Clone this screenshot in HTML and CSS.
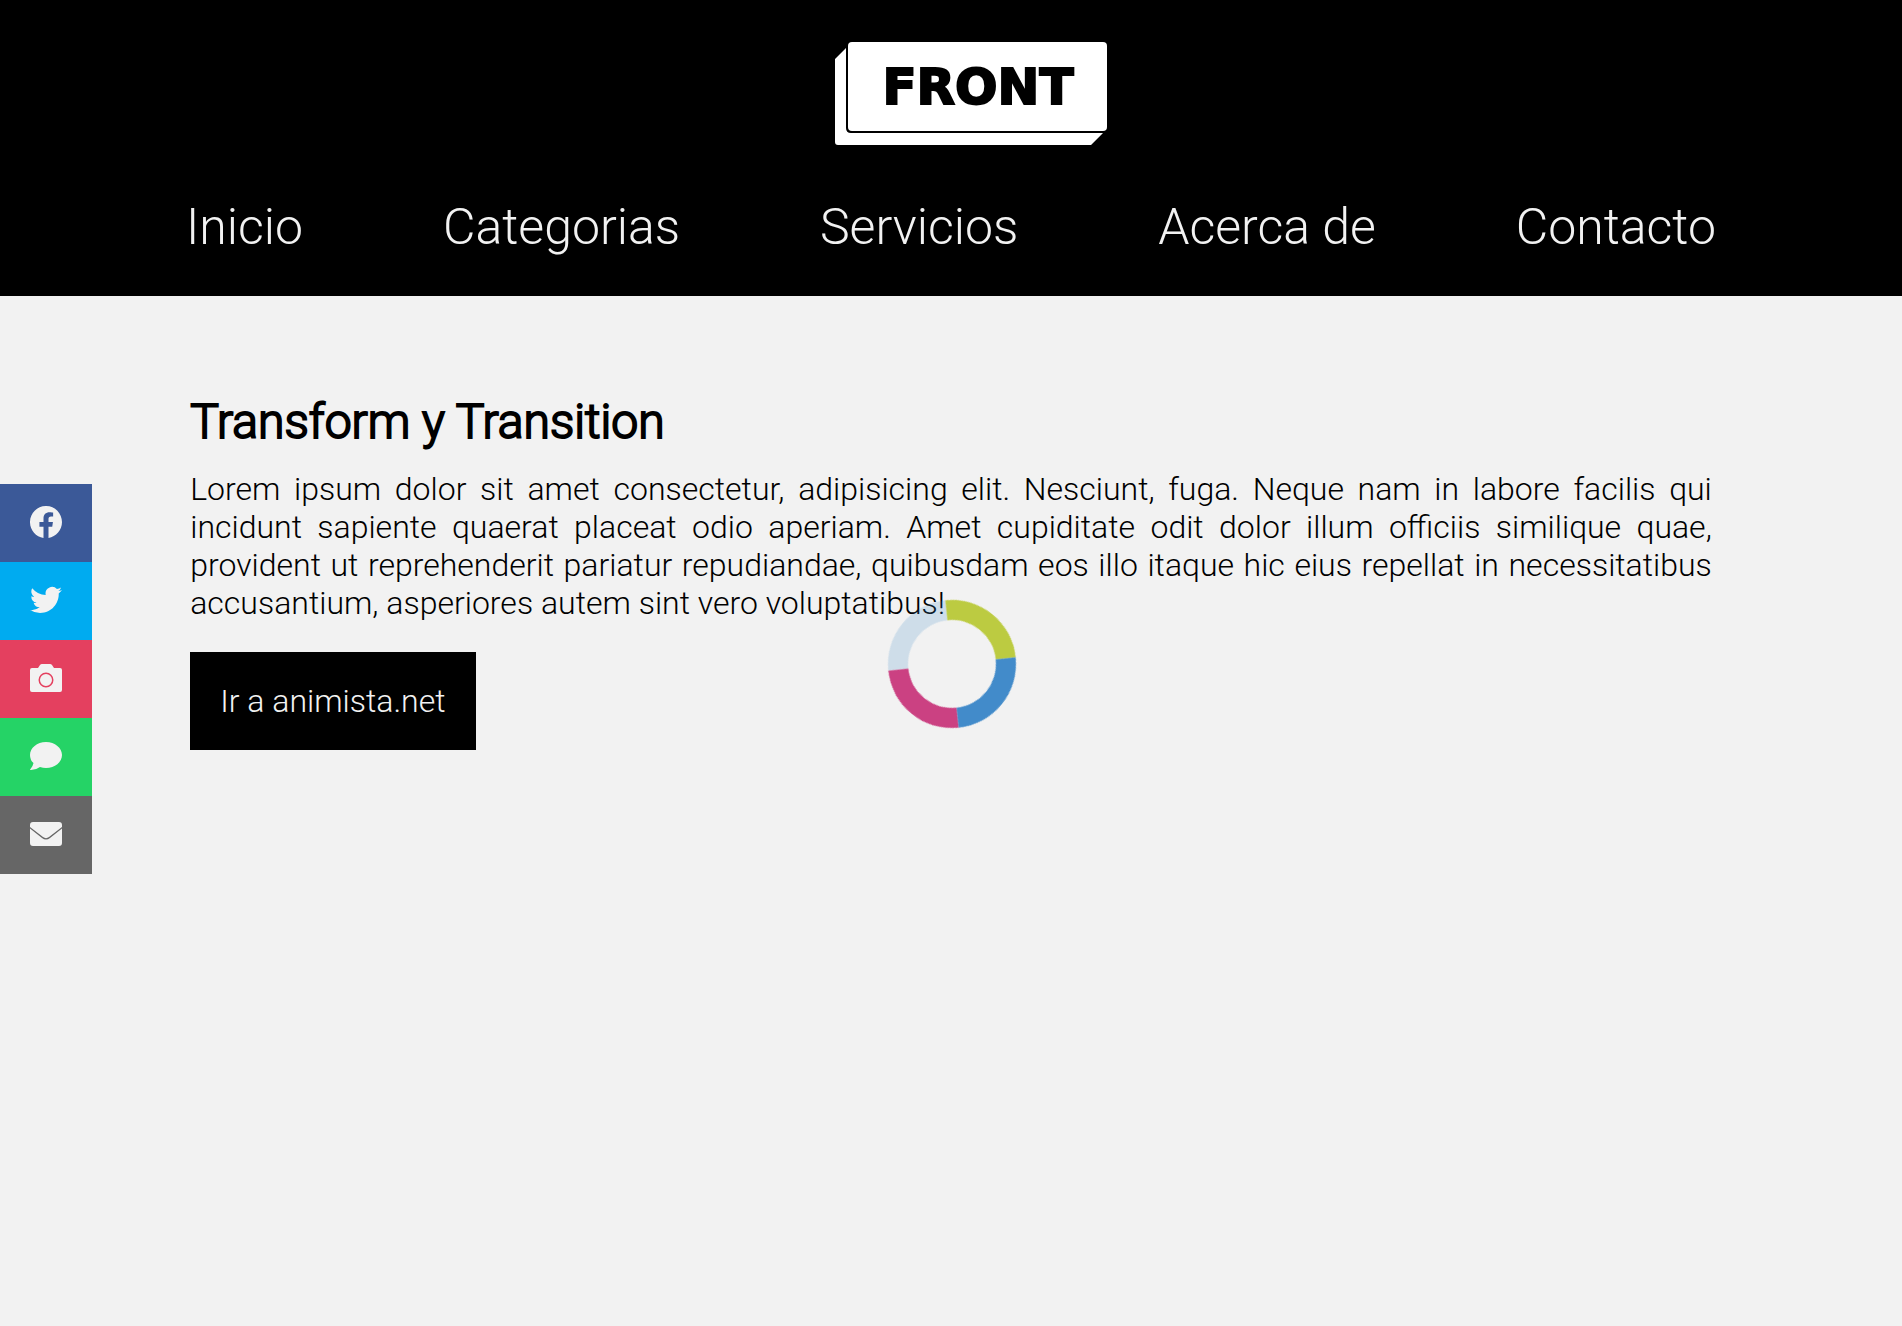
FILE: index.html
```html
<!DOCTYPE html>
<html lang="es">
<head>
  <meta charset="utf-8">
  <meta name="viewport" content="width=device-width, initial-scale=1">
  <title>Transform y Transition</title>
  <link rel="stylesheet" href="styles.css">
</head>
<body>
  <header class="header">
    <a class="logo" href="#" aria-label="Front">
      <svg class="logo-art" viewBox="0 0 272 103">
        <path class="logo-face" d="M11 6V86Q11 91 16 91H268L256 103H3Q0 103 0 100V17Z"/>
        <rect class="logo-face" x="13" y="0" width="259" height="89" rx="4"/>
        <text class="logo-text" x="143" y="62" text-anchor="middle">FRONT</text>
      </svg>
    </a>
    <nav class="nav">
      <a class="nav-link" href="#">Inicio</a>
      <a class="nav-link" href="#">Categorias</a>
      <a class="nav-link" href="#">Servicios</a>
      <a class="nav-link" href="#">Acerca de</a>
      <a class="nav-link" href="#">Contacto</a>
    </nav>
  </header>

  <main class="content">
    <h2 class="title">Transform y Transition</h2>
    <p class="text">Lorem ipsum dolor sit amet consectetur, adipisicing elit. Nesciunt, fuga. Neque nam in labore facilis qui incidunt sapiente quaerat placeat odio aperiam. Amet cupiditate odit dolor illum officiis similique quae, provident ut reprehenderit pariatur repudiandae, quibusdam eos illo itaque hic eius repellat in necessitatibus accusantium, asperiores autem sint vero voluptatibus!</p>
    <a class="button" href="#">Ir a animista.net</a>
  </main>

  <aside class="social">
    <a class="social-link facebook" href="#" aria-label="Facebook">
      <svg class="icon" viewBox="0 0 16 16"><path d="M16 8.049c0-4.446-3.582-8.05-8-8.05C3.58 0-.002 3.603-.002 8.05c0 4.017 2.926 7.347 6.75 7.951v-5.625h-2.03V8.05H6.75V6.275c0-2.017 1.195-3.131 3.022-3.131.876 0 1.791.157 1.791.157v1.98h-1.009c-.993 0-1.303.621-1.303 1.258v1.51h2.218l-.354 2.326H9.25V16c3.824-.604 6.75-3.934 6.75-7.951"/></svg>
    </a>
    <a class="social-link twitter" href="#" aria-label="Twitter">
      <svg class="icon" viewBox="0 0 16 16"><path d="M5.026 14.500c6.038 0 9.341-5.003 9.341-9.334q.002-.211-.006-.422A6.7 6.7 0 0 0 16 3.042a6.7 6.7 0 0 1-1.889.518 3.3 3.3 0 0 0 1.447-1.817 6.5 6.5 0 0 1-2.087.793A3.286 3.286 0 0 0 7.875 5.530a9.32 9.32 0 0 1-6.767-3.429 3.29 3.29 0 0 0 1.018 4.382A3.3 3.3 0 0 1 .64 6.075v.045a3.29 3.29 0 0 0 2.632 3.218 3.2 3.2 0 0 1-.865.115 3 3 0 0 1-.614-.057 3.28 3.28 0 0 0 3.067 2.277A6.6 6.6 0 0 1 .78 13.080a6 6 0 0 1-.78-.045A9.34 9.34 0 0 0 5.026 14.500"/></svg>
    </a>
    <a class="social-link camera" href="#" aria-label="Instagram">
      <svg class="icon" viewBox="0 0 32 32"><path fill-rule="evenodd" d="M2 6H8L10 3Q10.700 2 12 2H20Q21.300 2 22 3L24 6H30Q32 6 32 8V28Q32 30 30 30H2Q0 30 0 28V8Q0 6 2 6ZM16 10.500A7.500 7.500 0 1 0 16 25.500A7.500 7.500 0 1 0 16 10.500ZM16 12A6 6 0 1 1 16 24A6 6 0 1 1 16 12Z"/></svg>
    </a>
    <a class="social-link chat" href="#" aria-label="WhatsApp">
      <svg class="icon" viewBox="0 0 32 32"><path d="M16 2C25 2 32 8 32 15S25 28 16 28Q13 28 10 27Q6 30 1 30Q-.5 30 .5 29Q3 26 3.500 23Q0 20 0 15C0 8 7 2 16 2Z"/></svg>
    </a>
    <a class="social-link mail" href="#" aria-label="Correo">
      <svg class="icon" viewBox="0 0 32 32"><path d="M3 4H29Q32 4 32 7V9L19 19Q16 21.300 13 19L0 9V7Q0 4 3 4ZM0 10.500L12 20Q16 23 20 20L32 10.500V25Q32 28 29 28H3Q0 28 0 25Z"/></svg>
    </a>
  </aside>

  <div class="loader" role="status" aria-label="Cargando"></div>
</body>
</html>
```

FILE: styles.css
```css
* {
  box-sizing: border-box;
}

body {
  margin: 0;
  background: #f2f2f2;
  color: #000;
  font-family: Roboto, "Liberation Sans", sans-serif;
  font-size: 32px;
  font-weight: 300;
  line-height: 38px;
}

a {
  color: #f2f2f2;
  text-decoration: none;
}

.header {
  display: flex;
  flex-direction: column;
  gap: 53px;
  padding: 42px 186px 40px;
  background: #000;
}

.logo {
  display: flex;
  align-self: center;
  margin-left: 40px;
}

.logo-art {
  width: 272px;
  height: 103px;
}

.logo-face {
  fill: #fff;
}

.logo-text {
  fill: #000;
  stroke: #000;
  stroke-width: 2px;
  font-family: "DejaVu Sans", sans-serif;
  font-size: 50px;
  font-weight: 700;
}

.nav {
  display: flex;
  justify-content: space-between;
}

.nav-link {
  font-size: 50px;
  line-height: 58px;
}

.content {
  width: 80%;
  margin: 0 auto;
  padding: 97px 0;
}

.title {
  margin: 0 0 19px;
  font-size: 48px;
  font-weight: 300;
  line-height: 58px;
  -webkit-text-stroke: 2px #000;
}

.text {
  margin: 0 0 30px;
  text-align: justify;
}

.button {
  display: inline-block;
  padding: 30px;
  background: #000;
}

.social {
  position: fixed;
  top: 484px;
  left: 0;
  display: flex;
  flex-direction: column;
}

.social-link {
  display: flex;
  padding: 22px 30px 24px;
}

.icon {
  width: 32px;
  height: 32px;
  fill: #f2f2f2;
}

.facebook {
  background: #3b5998;
}

.twitter {
  background: #00abf0;
}

.camera {
  background: #e4405f;
}

.chat {
  background: #25d366;
}

.mail {
  background: #666;
}

.loader {
  position: fixed;
  inset: 2px 0 0 2px;
  width: 128px;
  height: 128px;
  margin: auto;
  border: 20px solid rgba(66, 139, 202, 0.2);
  border-top-color: #bccb41;
  border-right-color: #428bca;
  border-bottom-color: #cb4182;
  border-radius: 50%;
  transform: rotate(39deg);
}
```
